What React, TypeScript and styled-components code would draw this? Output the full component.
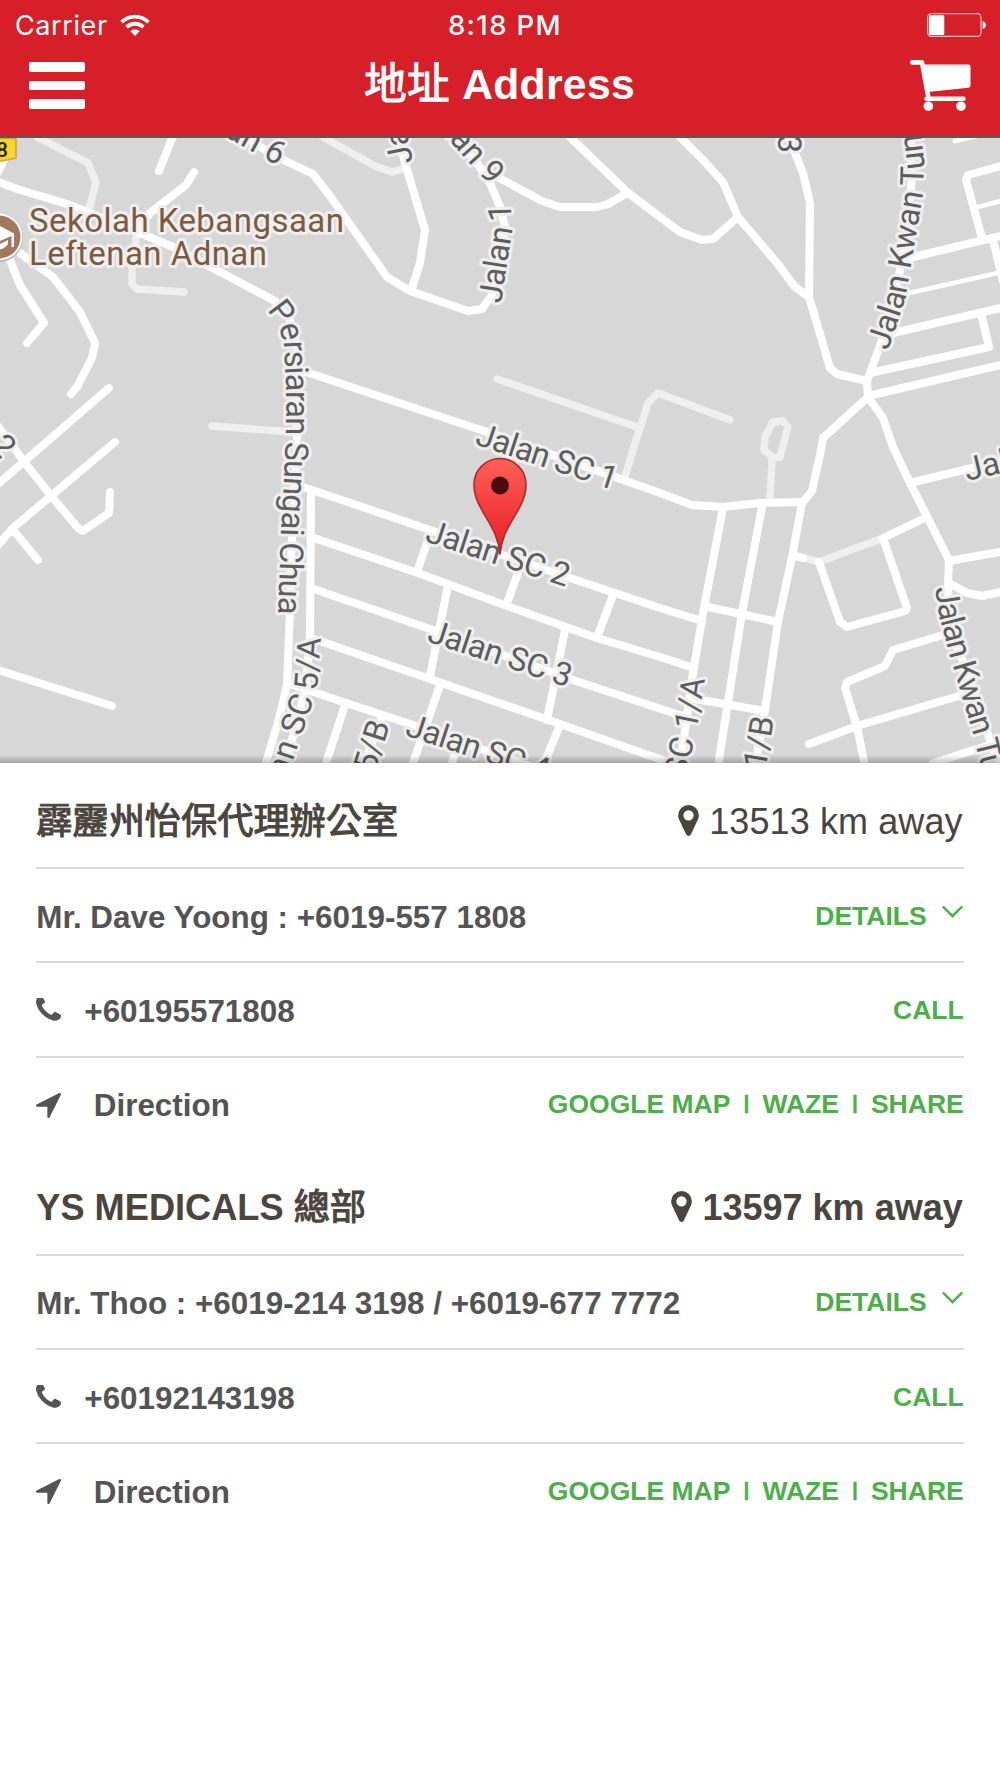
import React from "react";
import styled, {createGlobalStyle} from "styled-components";

type Branch = {
    name: string
    nameCjk: string
    distance: string
    boldDistance?: boolean
    contact: string
    phone: string
}

const branches: Branch[] = [
    {
        name: "",
        nameCjk: "霹靂州怡保代理辦公室",
        distance: "13513 km away",
        contact: "Mr. Dave Yoong : +6019-557 1808",
        phone: "+60195571808",
    },
    {
        name: "YS MEDICALS ",
        nameCjk: "總部",
        distance: "13597 km away",
        boldDistance: true,
        contact: "Mr. Thoo : +6019-214 3198 / +6019-677 7772",
        phone: "+60192143198",
    },
]

const paths = "M37,137 L88,163 L96,182 L89,210 M137,233 L132,263 L132,284 L137,289 L184,292 M323,137 L375,166 L392,172 L403,169 M497,379 L640,428 M730,420 L658,393 L648,403 L633,450 L625,477 M773,422 L783,421 L788,427 L780,457 L774,458 L764,450 L765,437 Z M772,459 L770,500 M212,426 L293,432 M883,538 L819,562 L797,556"

const roads = [
    // west side
    "M-4,181 L17,189 L67,204 L133,230 L173,247 L275,301 L290,320 L297,350 L297,440 L291,560 L290,610 L287,685 L280,715 L265,766",
    "M-2,172 L4,160 M173,136 L159,171 M194,172 L186,185 L150,213 L138,230",
    "M10,260 L20,285 L44,323 L27,343 M20,253 L53,277 L80,312 L95,343 L92,358 L77,387 L71,394",
    "M109,388 L-2,484 M115,442 L13,528 L-2,545 M13,530 L38,560 M-3,425 L25,463 L52,497 L78,528 L83,531 L109,513 L110,492 M-2,670 L112,706",
    // north
    "M225,125 L277,157 L313,174 L330,196 L387,277 L410,291 L468,311 L482,309 L492,295 L500,250 L505,227 L500,207 L490,183 L477,163 L455,135",
    "M395,125 L405,163 L425,230 L420,263 L412,288 M490,173 L542,201 L560,207 L597,207 L608,204 L627,193",
    "M569,136 L627,192 L660,217 L680,232 L702,240 L713,239 L738,217",
    "M680,137 L703,160 L723,182 L738,217 L777,263 L795,287 L809,297 L830,368 L837,374 L867,381",
    "M785,130 L795,153 L803,173 L810,203 L809,297",
    // east side
    "M910,130 L912,177 L907,230 L900,270 L890,317 L882,340 L867,381 L868,397",
    "M1005,165 L968,175 L966,180 L982,238 M905,259 L1005,235 M993,240 L1004,285 M893,333 L1005,307 M981,313 L989,347 L870,373 M868,396 L1005,364",
    "M868,397 L823,438 L820,455 L812,491 L802,503 L792,557 L778,622 L765,710 L755,766",
    "M868,397 L883,418 L893,447 L910,483 L949,560 L948,585 L950,635 L965,665 L990,740 L1000,766",
    "M910,483 L1005,460 M949,561 L1005,551 M949,583 L967,593 L982,596 L1005,591",
    "M925,518 L883,538 L907,608 L905,611 L847,627 L840,622 L819,562 M795,556 L803,558",
    "M943,635 L893,650 L885,666 L847,682 L845,688 L857,727 L865,766 M809,744 L857,726 L962,695 M933,763 L990,745",
    // SC grid
    "M300,370 L487,432 L547,453 L660,493 L692,505 L723,507 L760,503 L803,502",
    "M297,485 L330,496 L430,530 L570,578 L660,608 L702,621",
    "M311,537 L418,573 L507,606 L563,626 L597,638 L660,657 L694,668",
    "M311,588 L430,629 L573,680 L670,712 L683,716",
    "M311,638 L430,679 L560,724 L668,762 M290,684 L340,701 L413,725 L530,766",
    "M311,492 L310,640 L305,690 L292,740 L285,766",
    "M428,540 L417,572 M447,590 L430,676 M518,573 L507,603 M613,595 L598,635 M565,630 L547,720 M440,685 L412,766 M560,725 L543,766 M345,705 L325,766 M382,717 L363,766 M456,750 L451,766",
    "M723,508 L703,613 L693,673 L680,766 M762,507 L742,613 L718,766 M708,607 L778,622 M695,699 L765,711",
]

const labels = [
    {id: "persiaran", d: "M267,310 L279,326 L284,345 L286,385 L286,430 L284,480 L281,530 L278,616", text: "Persiaran Sungai Chua", len: 309},
    {id: "kwan-n", d: "M888,351 L905,300 L911,265 L923,195 L924,160 L914,70", text: "Jalan Kwan Tung", len: 240},
    {id: "kwan-s", d: "M935,588 L939,614 L949,653 L972,730 L996,830", text: "Jalan Kwan Tung", len: 226},
    {id: "sc1", d: "M474,444 L640,499", text: "Jalan SC 1", len: 147},
    {id: "sc2", d: "M424,541 L600,598", text: "Jalan SC 2", len: 149},
    {id: "sc3", d: "M426,641 L600,698", text: "Jalan SC 3", len: 149},
    {id: "sc4", d: "M404,735 L580,793", text: "Jalan SC 4", len: 149},
    {id: "j1", d: "M501,304 L512,232 L510,180", text: "Jalan 1", len: 102},
    {id: "j9", d: "M383,66 L472,166 L490,186", text: "Jalan 9", end: true},
    {id: "j6", d: "M130,84 L278,166", text: "Jalan 6", end: true},
    {id: "ja", d: "M413,162 L397,80", text: "Jalan"},
    {id: "j3", d: "M779,20 L778,153", text: "Jalan 3", end: true},
    {id: "sc5a", d: "M255,870 L305,725 L317,690 L321,638", text: "Jalan SC 5/A", end: true},
    {id: "sc5b", d: "M341,880 L390,724", text: "Jalan SC 5/B", end: true},
    {id: "sc1a", d: "M665,880 L698,722 L705,679", text: "Jalan SC 1/A", end: true},
    {id: "sc1b", d: "M744,900 L774,718", text: "Jalan SC 1/B", end: true},
    {id: "jal", d: "M967,481 L1100,450", text: "Jalan"},
    {id: "two", d: "M-90,352 L1,460", text: "Jalan 2", end: true},
]

const Wifi = () => (
    <svg width="30" height="22" viewBox="0 0 30 22" fill="none" stroke="#fff">
        <path d="M1.6,8.2 a19,19 0 0 1 26.8,0" strokeWidth="3.8"/>
        <path d="M6.6,13.2 a12,12 0 0 1 16.8,0" strokeWidth="3.8"/>
        <path d="M15,22 l-4.6,-4.8 a6.6,6.6 0 0 1 9.2,0 z" fill="#fff" stroke="none"/>
    </svg>
)

const Battery = () => (
    <svg width="59" height="24" viewBox="0 0 59 24">
        <rect x="0.7" y="0.7" width="53.3" height="22.6" rx="3.5" fill="none" stroke="#f2b3b8" strokeWidth="1.3"/>
        <rect x="2" y="2" width="15.3" height="20" rx="1.5" fill="#fff"/>
        <path d="M55.6,8 q3.2,1 3.2,4 t-3.2,4 z" fill="#fff"/>
    </svg>
)

const Cart = () => (
    <svg width="62" height="52" viewBox="0 0 62 52" fill="#fff">
        <path d="M2.3,2.4 H12 L18.5,38" fill="none" stroke="#fff" strokeWidth="4.6" strokeLinecap="round" strokeLinejoin="round"/>
        <path d="M13,4.6 H58.5 q2,0 2,2 V25.5 q0,2 -2,2.3 L18,32 z"/>
        <path d="M16.5,38.8 H53.5" stroke="#fff" strokeWidth="4.5" strokeLinecap="round"/>
        <circle cx="18.4" cy="46.2" r="4.8"/>
        <circle cx="51" cy="46.2" r="4.8"/>
    </svg>
)

const Marker = () => (
    <svg width="21" height="31" viewBox="0 0 1024 1536">
        <path fill="#4a453f" transform="translate(0,1408) scale(1,-1)" d="M768 896q0 106 -75 181t-181 75t-181 -75t-75 -181t75 -181t181 -75t181 75t75 181zM1024 896q0 -109 -33 -179l-364 -774q-16 -33 -47.5 -52t-67.5 -19t-67.5 19t-46.5 52l-365 774q-33 70 -33 179q0 212 150 362t362 150t362 -150t150 -362z"/>
    </svg>
)

const Phone = () => (
    <svg width="25" height="25" viewBox="0 0 1408 1408">
        <path fill="#545454" transform="translate(0,1280) scale(1,-1)" d="M1408 296q0 -27 -10 -70.5t-21 -68.5q-21 -50 -122 -106q-94 -51 -186 -51q-27 0 -52.5 3.5t-57.5 12.5t-47.5 14.5t-55.5 20.5t-49 18q-98 35 -175 83q-128 79 -264.5 215.5t-215.5 264.5q-48 77 -83 175q-3 9 -18 49t-20.5 55.5t-14.5 47.5t-12.5 57.5t-3.5 52.5q0 92 51 186q56 101 106 122q25 11 68.5 21t70.5 10q14 0 21 -3q18 -6 53 -76q11 -19 30 -54t35 -63.5t31 -53.5q3 -4 17.5 -25t21.5 -35.5t7 -28.5q0 -20 -28.5 -50t-62 -55t-62 -53t-28.5 -46q0 -9 5 -22.5t8.5 -20.5t14 -24t11.5 -19q76 -137 174 -235t235 -174q2 -1 19 -11.5t24 -14t20.5 -8.5t22.5 -5q18 0 46 28.5t53 62t55 62t50 28.5q14 0 28.5 -7t35.5 -21.5t25 -17.5q25 -15 53.5 -31t63.5 -35t54 -30q70 -35 76 -53q3 -7 3 -21z"/>
    </svg>
)

const Arrow = () => (
    <svg width="25" height="25" viewBox="0 0 1408 1408">
        <path fill="#545454" transform="translate(0,1280) scale(1,-1)" d="M1401 1187l-640 -1280q-17 -35 -57 -35q-5 0 -15 2q-22 5 -35.5 22.5t-13.5 39.5v576h-576q-22 0 -39.5 13.5t-22.5 35.5t4 42t29 30l1280 640q13 7 29 7q27 0 45 -19q15 -14 18.5 -34.5t-6.5 -39.5z"/>
    </svg>
)

const Chevron = () => (
    <svg width="21" height="12" viewBox="0 0 21 12" fill="none" stroke="#4caf4a" strokeWidth="2.4" strokeLinecap="round">
        <path d="M1.5,1.2 L10.5,10.2 L19.5,1.2"/>
    </svg>
)

const StreetMap = () => (
    <MapSvg viewBox="0 138 1000 625">
        <defs>
            <linearGradient id="pin" x1="0" y1="0" x2="0" y2="1">
                <stop offset="0" stopColor="#ff6057"/>
                <stop offset="1" stopColor="#e81c25"/>
            </linearGradient>
            <linearGradient id="edge" x1="0" y1="0" x2="0" y2="1">
                <stop offset="0" stopColor="#000" stopOpacity="0"/>
                <stop offset="1" stopColor="#000" stopOpacity="0.24"/>
            </linearGradient>
            {labels.map(l => <path key={l.id} id={l.id} d={l.d}/>)}
        </defs>
        <rect y="138" width="1000" height="625" fill="#d7d7d7"/>
        <Road d={paths} minor/>
        <Road d="M955,141 L1005,129 M978,207 L1005,200 M905,294 L998,273" thin/>
        {roads.map(d => <Road key={d} d={d}/>)}
        {labels.map(l => (
            <Street key={l.id} textAnchor={l.end ? "end" : "start"} textLength={l.len}>
                <textPath href={`#${l.id}`} startOffset={l.end ? "100%" : "0"} textLength={l.len}>{l.text}</textPath>
            </Street>
        ))}
        <path d="M-4,138.5 H10 L16,139 V158 L2,161 H-4 z" fill="#fdd42c" stroke="#d9a62a" strokeWidth="1.6"/>
        <Shield x="-4" y="156.5">8</Shield>
        <circle cx="-1" cy="238" r="24" fill="#b5b5b5"/>
        <circle cx="-1" cy="237" r="23.4" fill="#fff"/>
        <circle cx="-1" cy="237" r="21.5" fill="#a2775d"/>
        <path d="M-2,225 L14,233.5 V247 H11.5 V236 L-2,242 z M-2,245 L8,240 V244 Q5,249 -2,250 z" fill="#fff"/>
        <Place x="29" y="231.5" textLength="315">Sekolah Kebangsaan</Place>
        <Place x="29" y="265" textLength="238">Leftenan Adnan</Place>
        <path d="M500,554.5 C498,524 474,510 474,484.5 a26,26 0 0 1 52,0 C526,510 502,524 500,554.5 z" fill="url(#pin)" stroke="#a92a2a" strokeWidth="1.6"/>
        <circle cx="500" cy="485.5" r="9" fill="#4b0c0e"/>
        <rect y="755" width="1000" height="8" fill="url(#edge)"/>
    </MapSvg>
)

const Office = ({branch}: { branch: Branch }) => (
    <section>
        <TitleRow>
            <Name>{branch.name}<Cjk>{branch.nameCjk}</Cjk></Name>
            <Distance bold={branch.boldDistance}><MarkerBox><Marker/></MarkerBox>{branch.distance}</Distance>
        </TitleRow>
        <Row>
            <Info>{branch.contact}</Info>
            <Actions>
                <Action>DETAILS</Action>
                <ChevronBox><Chevron/></ChevronBox>
            </Actions>
        </Row>
        <Row>
            <Info gap={23}><IconBox><Phone/></IconBox>{branch.phone}</Info>
            <Actions><Action>CALL</Action></Actions>
        </Row>
        <Row last>
            <Info gap={32.5}><IconBox><Arrow/></IconBox>Direction</Info>
            <Actions>
                <Action>GOOGLE MAP</Action>
                <Split>I</Split>
                <Action>WAZE</Action>
                <Split>I</Split>
                <Action>SHARE</Action>
            </Actions>
        </Row>
    </section>
)

const App = () => {
    return (
        <Screen>
            <GlobalStyle/>
            <Header>
                <StatusBar>
                    <Carrier>Carrier <Wifi/></Carrier>
                    <Time>8:18 PM</Time>
                    <BatteryBox><Battery/></BatteryBox>
                </StatusBar>
                <NavBar>
                    <Burger><Bar/><Bar/><Bar/></Burger>
                    <Title><Cjk>地址</Cjk> Address</Title>
                    <Cart/>
                </NavBar>
            </Header>
            <StreetMap/>
            <List>
                {branches.map(b => <Office key={b.phone} branch={b}/>)}
            </List>
        </Screen>
    )
}

export default App

const GlobalStyle = createGlobalStyle`
  * {
    box-sizing: border-box;
  }
  body {
    margin: 0;
    background: #fff;
    font-family: "Liberation Sans", "Noto Sans CJK TC", sans-serif;
  }
  svg {
    display: block;
    flex-shrink: 0;
  }
`
const Screen = styled.div`
  width: 1000px;
  height: 1778px;
  overflow: hidden;
  background: #fff;
`
const Header = styled.header`
  height: 138px;
  background: #d61f28;
  border-bottom: 2px solid #585858;
`
const StatusBar = styled.div`
  height: 50px;
  padding: 0 14px 0 15px;
  display: grid;
  grid-template-columns: 1fr auto 1fr;
  align-items: center;
  font-family: Inter, sans-serif;
  font-size: 27px;
  color: #fff;
`
const Carrier = styled.div`
  display: flex;
  align-items: center;
  gap: 12px;
  letter-spacing: 0.6px;
  font-weight: 400;
`
const Time = styled.div`
  margin-left: 9px;
  font-size: 27.5px;
  font-weight: 500;
  letter-spacing: 1.4px;
`
const BatteryBox = styled.div`
  display: flex;
  justify-content: flex-end;
`
const NavBar = styled.div`
  height: 71px;
  padding: 0 28px 0 29px;
  display: flex;
  justify-content: space-between;
  align-items: center;
`
const Burger = styled.div`
  width: 56px;
  display: flex;
  flex-direction: column;
  gap: 9px;
`
const Bar = styled.div`
  height: 9.6px;
  border-radius: 2px;
  background: #fff;
`
const Cjk = styled.span`
  font-family: "Noto Sans CJK TC", sans-serif;
  font-weight: 400;
  -webkit-text-stroke: 1.1px currentColor;
`
const Title = styled.h1`
  margin: 0 0 6px 4px;
  font-size: 42.67px;
  line-height: 60px;
  font-weight: 700;
  letter-spacing: 0.3px;
  color: #fff;
`
const MapSvg = styled.svg`
  width: 1000px;
  height: 625px;
`
const Road = styled.path.withConfig({shouldForwardProp: p => p !== "minor" && p !== "thin"})<{ minor?: boolean, thin?: boolean }>`
  fill: none;
  stroke: ${props => props.minor ? "#efefef" : "#fff"};
  stroke-width: ${props => props.thin ? 4.8 : props.minor ? 7.4 : 8};
  stroke-linecap: round;
  stroke-linejoin: round;
`
const MapText = styled.text`
  font-family: Roboto, sans-serif;
  stroke: #efefef;
  stroke-width: 6px;
  stroke-linejoin: round;
  paint-order: stroke;
`
const Street = styled(MapText)`
  font-size: 32.6px;
  fill: #5d5d5d;
`
const Place = styled(MapText)`
  font-size: 33px;
  fill: #7d5a3d;
`
const Shield = styled.text`
  font-family: Roboto, sans-serif;
  font-size: 21px;
  font-weight: 500;
  fill: #222;
`
const List = styled.main`
  padding: 2px 36.3px 0;
`
const TitleRow = styled.div`
  height: 104px;
  padding-top: 10px;
  display: flex;
  justify-content: space-between;
  align-items: center;
  border-bottom: 2px solid #dadada;
  color: #4a453f;
`
const Name = styled.h2`
  margin: 0 0 3px;
  font-size: 36.2px;
  line-height: 50px;
  font-weight: 700;
`
const Distance = styled.div.withConfig({shouldForwardProp: p => p !== "bold"})<{ bold?: boolean }>`
  padding: 1px 1px 0 0;
  display: flex;
  align-items: center;
  gap: 10px;
  font-size: 36px;
  line-height: 50px;
  letter-spacing: ${props => props.bold ? 0 : 0.1}px;
  font-weight: ${props => props.bold ? 700 : 400};
`
const MarkerBox = styled.span`
  margin-bottom: 3px;
`
const Row = styled.div<{ last?: boolean }>`
  height: 94.25px;
  padding-top: 2px;
  display: flex;
  justify-content: space-between;
  align-items: center;
  border-bottom: 2px solid ${props => props.last ? "transparent" : "#dadada"};
`
const Info = styled.div<{ gap?: number }>`
  padding-top: 3px;
  display: flex;
  align-items: center;
  gap: ${props => props.gap || 0}px;
  font-size: 31.4px;
  font-weight: 700;
  color: #545454;
`
const IconBox = styled.span`
  margin-bottom: 2px;
`
const Actions = styled.div`
  display: flex;
  align-items: center;
  color: #4caf4a;
`
const Action = styled.span`
  font-size: 26.5px;
  font-weight: 700;
`
const Split = styled.span`
  width: 32px;
  text-align: center;
  font-size: 26.67px;
  -webkit-text-stroke: 0.6px currentColor;
`
const ChevronBox = styled.span`
  margin: 0 1px 9px 15px;
`
